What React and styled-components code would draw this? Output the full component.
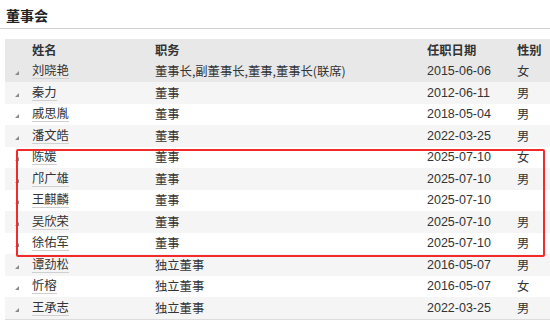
import React from "react"
import styled, { createGlobalStyle } from "styled-components"

const GlobalStyle = createGlobalStyle`
body{
    margin: 0;
    background: #fff;
    font-family: "Liberation Sans", "Noto Sans CJK SC", sans-serif;
    color: #333;
}
`

const rows = [
    ["刘晓艳", "董事长,副董事长,董事,董事长(联席)", "2015-06-06", "女"],
    ["秦力", "董事", "2012-06-11", "男"],
    ["戚思胤", "董事", "2018-05-04", "男"],
    ["潘文皓", "董事", "2022-03-25", "男"],
    ["陈媛", "董事", "2025-07-10", "女"],
    ["邝广雄", "董事", "2025-07-10", "男"],
    ["王麒麟", "董事", "2025-07-10", ""],
    ["吴欣荣", "董事", "2025-07-10", "男"],
    ["徐佑军", "董事", "2025-07-10", "男"],
    ["谭劲松", "独立董事", "2016-05-07", "男"],
    ["忻榕", "独立董事", "2016-05-07", "女"],
    ["王承志", "独立董事", "2022-03-25", "男"],
]

const App = () => {
    return (
        <Page>
            <GlobalStyle />
            <Title>董事会</Title>
            <Table>
                <Row $tone="head">
                    <Cell />
                    <HeadCell>姓名</HeadCell>
                    <HeadCell>职务</HeadCell>
                    <HeadCell>任职日期</HeadCell>
                    <HeadCell>性别</HeadCell>
                </Row>
                {rows.map((r, i) => (
                    <Row key={r[0]} $tone={i === 0 ? "hover" : i % 2 === 1 ? "alt" : "plain"}>
                        <Cell><Arrow /></Cell>
                        <Cell><Name>{r[0]}</Name></Cell>
                        <Cell>{r[1]}</Cell>
                        <DateCell>{r[2]}</DateCell>
                        <Cell>{r[3]}</Cell>
                    </Row>
                ))}
                <Mark />
            </Table>
        </Page>
    )
}
export default App

const Page = styled.div`
width: 550px;
height: 325px;
overflow: hidden;
`
const Title = styled.div`
height: 29px;
padding: 6px 0 0 6px;
box-sizing: border-box;
border-bottom: 1px solid #cfcfcf;
font-family: "Noto Sans CJK SC", sans-serif;
font-size: 14px;
font-weight: 700;
line-height: 18px;
color: #222;
`
const Table = styled.div`
position: relative;
margin: 10px 0 0 5px;
border-bottom: 1px solid #dcdcdc;
`
const tones = {
    head: "#e8e8e8",
    hover: "#e8e8e8",
    alt: "#f5f5f5",
    plain: "#fff",
}
const Row = styled.div`
display: grid;
grid-template-columns: 27px 123px 272px 90px 1fr;
height: 21.5px;
align-items: center;
background: ${p => tones[p.$tone]};
`
const Cell = styled.div`
font-family: "Noto Sans CJK SC", sans-serif;
font-size: 12.3px;
line-height: 16px;
color: #333;
white-space: nowrap;
display: flex;
align-items: center;
`
const HeadCell = styled(Cell)`
font-weight: 700;
color: #333;
`
const DateCell = styled(Cell)`
font-family: "Liberation Sans", sans-serif;
font-size: 12.5px;
color: #333;
`
const Name = styled.span`
border-bottom: 1px solid #d0d0d0;
line-height: 15px;
`
const Arrow = styled.span`
margin: 4px 0 0 10px;
width: 0;
height: 0;
border-style: solid;
border-width: 0 0 4px 4px;
border-color: transparent transparent #8a8a8a transparent;
`
const Mark = styled.div`
position: absolute;
left: 11px;
top: 110px;
width: 525px;
height: 104px;
border: 2px solid #f42a2a;
border-radius: 2px;
pointer-events: none;
`
